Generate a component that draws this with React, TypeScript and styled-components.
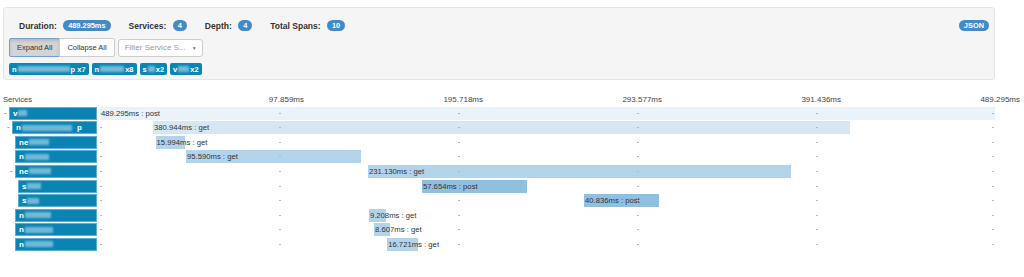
import styled, { createGlobalStyle } from 'styled-components';

const GlobalStyle = createGlobalStyle`
  body {
    margin: 0;
    background: #fff;
    color: #333;
    font-family: "Liberation Sans", Arial, sans-serif;
  }
`;

type Span = {
  lead: string;
  smudge: number;
  tail?: string;
  depth: number;
  toggle?: boolean;
  start: number;
  duration: number;
  method: string;
};

const TOTAL = 489.295;
const TICKS = ['97.859ms', '195.718ms', '293.577ms', '391.436ms', '489.295ms'];
const DEPTH_COLORS = ['#eaf2f9', '#d6e7f3', '#b3d3ea', '#8fc0e0'];

const spans: Span[] = [
  { lead: 'v', smudge: 9, depth: 0, toggle: true, start: 0, duration: 489.295, method: 'post' },
  { lead: 'n', smudge: 50, tail: 'p', depth: 1, toggle: true, start: 29, duration: 380.944, method: 'get' },
  { lead: 'ne', smudge: 20, depth: 2, start: 30.4, duration: 15.994, method: 'get' },
  { lead: 'n', smudge: 24, depth: 2, start: 47, duration: 95.59, method: 'get' },
  { lead: 'ne', smudge: 22, depth: 2, toggle: true, start: 146.5, duration: 231.13, method: 'get' },
  { lead: 's', smudge: 14, depth: 3, start: 176, duration: 57.654, method: 'post' },
  { lead: 's', smudge: 12, depth: 3, start: 264.6, duration: 40.836, method: 'post' },
  { lead: 'n', smudge: 26, depth: 2, start: 147, duration: 9.208, method: 'get' },
  { lead: 'n', smudge: 28, depth: 2, start: 149.8, duration: 8.607, method: 'get' },
  { lead: 'n', smudge: 28, depth: 2, start: 157, duration: 16.721, method: 'get' },
];

const tags = [
  { lead: 'n', smudge: 52, tail: 'p x7' },
  { lead: 'n', smudge: 24, tail: 'x8' },
  { lead: 's', smudge: 7, tail: 'x2' },
  { lead: 'v', smudge: 11, tail: 'x2' },
];

function App() {
  return (
    <Page>
      <GlobalStyle />
      <Well>
        <TopLine>
          <Stats>
            <Stat>
              Duration: <Badge>489.295ms</Badge>
            </Stat>
            <Stat>
              Services: <Badge>4</Badge>
            </Stat>
            <Stat>
              Depth: <Badge>4</Badge>
            </Stat>
            <Stat>
              Total Spans: <Badge>10</Badge>
            </Stat>
          </Stats>
          <Badge>JSON</Badge>
        </TopLine>

        <Controls>
          <ButtonGroup>
            <Button $active>Expand All</Button>
            <Button>Collapse All</Button>
          </ButtonGroup>
          <Select>
            <span>Filter Service S...</span>
            <Caret>▼</Caret>
          </Select>
        </Controls>

        <Tags>
          {tags.map((t, i) => (
            <Tag key={i}>
              {t.lead}
              <Smudge $w={t.smudge} />
              {t.tail}
            </Tag>
          ))}
        </Tags>
      </Well>

      <Header>
        <span className="services">Services</span>
        {TICKS.map(t => (
          <TickLabel key={t}>{t}</TickLabel>
        ))}
      </Header>

      {spans.map((s, i) => (
        <Row key={i}>
          <ServiceCell $depth={s.depth}>
            <Toggle>{s.toggle ? '-' : ''}</Toggle>
            <ServiceBox>
              {s.lead}
              <Smudge $w={s.smudge} />
              {s.tail && <span className="tail">{s.tail}</span>}
            </ServiceBox>
          </ServiceCell>
          <Track>
            <Bar
              $color={DEPTH_COLORS[s.depth]}
              style={{
                left: `${(s.start / TOTAL) * 100}%`,
                width: `${(s.duration / TOTAL) * 100}%`,
              }}>
              <BarLabel>
                {s.duration.toFixed(3)}ms : {s.method}
              </BarLabel>
            </Bar>
            {[0, 1, 2, 3, 4, 5].map(k => (
              <Dot key={k} style={{ left: `calc(${k * 20}% - ${k === 5 ? 3 : 0}px)` }} />
            ))}
          </Track>
        </Row>
      ))}
    </Page>
  );
}

const Page = styled.div`
  width: 1024px;
  height: 277px;
  overflow: hidden;
`;

const Well = styled.div`
  box-sizing: border-box;
  width: 992px;
  height: 73px;
  margin: 7px 0 0 3px;
  padding: 12px 5px 4px 5px;
  background: #f5f5f5;
  border: 1px solid #e6e6e6;
  border-radius: 3px;
`;

const TopLine = styled.div`
  display: flex;
  justify-content: space-between;
  align-items: center;
  height: 11px;
  padding-left: 10px;
`;

const Stats = styled.div`
  display: flex;
  align-items: center;
  gap: 18px;
`;

const Stat = styled.span`
  display: flex;
  align-items: center;
  gap: 4px;
  font-size: 8.5px;
  font-weight: bold;
  color: #333;
  white-space: pre;
`;

const Badge = styled.span`
  display: inline-block;
  height: 11px;
  line-height: 11px;
  padding: 0 5px;
  border-radius: 6px;
  background: #428bca;
  color: #fff;
  font-size: 7.4px;
  font-weight: bold;
`;

const Controls = styled.div`
  display: flex;
  align-items: center;
  gap: 3px;
  margin-top: 7px;
  height: 19px;
`;

const ButtonGroup = styled.div`
  display: flex;
`;

const Button = styled.button<{ $active?: boolean }>`
  box-sizing: border-box;
  height: 19px;
  padding: 0 7px;
  margin: 0;
  font-family: inherit;
  font-size: 7.5px;
  color: #333;
  background: ${p => (p.$active ? '#d4d4d4' : '#fff')};
  border: 1px solid ${p => (p.$active ? '#6f9fd6' : '#ccc')};
  box-shadow: ${p => (p.$active ? 'inset 0 2px 3px rgba(0,0,0,0.12)' : 'none')};
  border-radius: ${p => (p.$active ? '2px 0 0 2px' : '0 2px 2px 0')};
  margin-left: ${p => (p.$active ? '0' : '-1px')};
`;

const Select = styled.div`
  box-sizing: border-box;
  display: flex;
  align-items: center;
  justify-content: space-between;
  width: 85px;
  height: 18px;
  padding: 0 5px 0 6px;
  background: #fff;
  border: 1px solid #ccc;
  border-radius: 3px;
  font-size: 8px;
  color: #999;
  white-space: nowrap;
`;

const Caret = styled.span`
  font-size: 5px;
  color: #777;
`;

const Tags = styled.div`
  display: flex;
  gap: 3px;
  margin-top: 6px;
`;

const Tag = styled.span`
  display: flex;
  align-items: center;
  height: 12px;
  padding: 0 3px;
  border-radius: 2px;
  background: #0b85b4;
  color: #fff;
  font-size: 7.5px;
  font-weight: bold;
  white-space: pre;
`;

const Smudge = styled.span<{ $w: number }>`
  display: inline-block;
  width: ${p => p.$w}px;
  height: 6px;
  margin: 0 1px;
  background: rgba(200, 230, 245, 0.55);
  filter: blur(1.3px);
`;

const Header = styled.div`
  display: grid;
  grid-template-columns: 125px repeat(5, 179px);
  align-items: center;
  height: 11px;
  margin-top: 14px;
  font-size: 8px;
  color: #444;

  .services {
    padding-left: 3px;
    font-size: 7.6px;
  }
`;

const TickLabel = styled.span`
  text-align: right;
`;

const Row = styled.div`
  display: flex;
  align-items: center;
  gap: 3px;
  height: 13px;
  margin-top: 1.6px;
`;

const ServiceCell = styled.div<{ $depth: number }>`
  box-sizing: border-box;
  display: flex;
  width: 97px;
  height: 13px;
  flex: none;
  padding-left: ${p => 4 + p.$depth * 3}px;
`;

const Toggle = styled.span`
  width: 5px;
  flex: none;
  font-size: 8px;
  line-height: 12px;
  color: #666;
`;

const ServiceBox = styled.div`
  box-sizing: border-box;
  flex: 1;
  display: flex;
  align-items: center;
  padding-left: 3px;
  background: #0b84b3;
  border: 1px solid #5aaed0;
  color: #fff;
  font-size: 8px;
  font-weight: bold;
  white-space: pre;

  .tail {
    margin-left: 4px;
  }
`;

const Track = styled.div`
  position: relative;
  width: 895px;
  height: 13px;
  flex: none;
`;

const Bar = styled.div<{ $color: string }>`
  position: absolute;
  top: 0;
  height: 13px;
  background: ${p => p.$color};
`;

const BarLabel = styled.span`
  position: absolute;
  left: 1px;
  top: 0;
  line-height: 13px;
  font-size: 7.7px;
  color: #333;
  white-space: nowrap;
`;

const Dot = styled.span`
  position: absolute;
  top: 6px;
  width: 2px;
  height: 1px;
  background: #b8b8b8;
`;

export default App;
